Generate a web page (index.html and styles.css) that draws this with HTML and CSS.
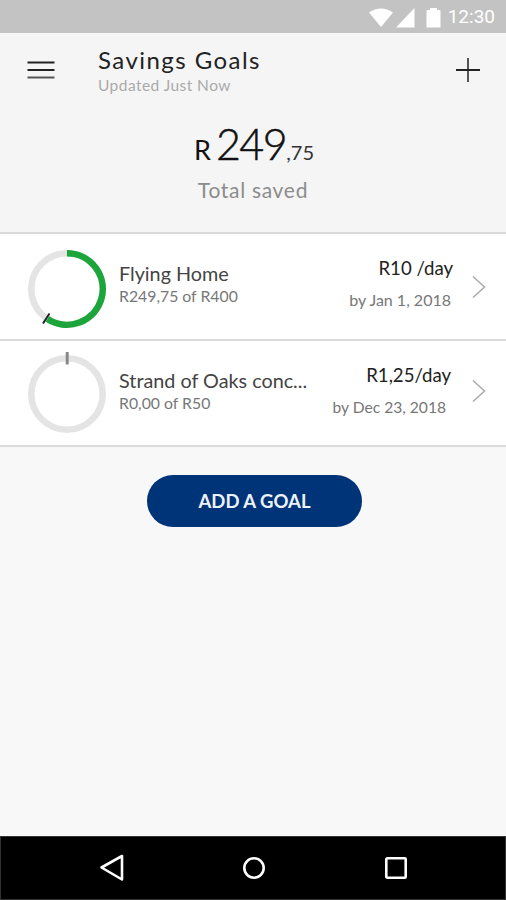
FILE: index.html
```html
<!DOCTYPE html>
<html lang="en">
<head>
    <meta charset="UTF-8">
    <meta name="viewport" content="width=device-width, initial-scale=1.0">
    <title>Savings Goals</title>
    <link rel="stylesheet" href="styles.css">
</head>
<body>
    <div class="screen">
        <div class="status-bar">
            <svg width="75" height="22" viewBox="0 0 75 22" fill="#fff">
                <path d="M1 5.500Q13 -2.500 25 5.500L13 20Z"/>
                <path d="M28 20.500L46.500 1V20.500Z"/>
                <path d="M58.500 4Q58.500 3 59.500 3H62V1H69V3H71.500Q72.500 3 72.500 4V20.500H58.500Z"/>
            </svg>
            <span class="clock">12:30</span>
        </div>

        <header class="header">
            <div class="toolbar">
                <svg class="menu-icon" width="28" height="20" viewBox="0 0 28 20" stroke="#222" stroke-width="2">
                    <path d="M0.500 2.500H27.500M0.500 10H27.500"/>
                    <path d="M0.500 17.500H27.500" stroke="#555"/>
                </svg>
                <div class="heading">
                    <h1>Savings Goals</h1>
                    <p class="updated">Updated Just Now</p>
                </div>
                <svg class="add-icon" width="24" height="24" viewBox="0 0 24 24" stroke-width="2">
                    <path d="M12 0V24" stroke="#555"/>
                    <path d="M0 12H24" stroke="#222"/>
                </svg>
            </div>
            <div class="total">
                <div class="amount">
                    <span class="currency">R</span>
                    <span class="whole">249</span>
                    <span class="cents">,75</span>
                </div>
                <p class="total-label">Total saved</p>
            </div>
        </header>

        <main>
            <div class="goal">
                <svg class="ring" width="82" height="86" viewBox="0 0 82 86" fill="none">
                    <circle cx="41" cy="43" r="35.750" stroke="#e4e4e4" stroke-width="6.500"/>
                    <path d="M41 7.250A35.750 35.750 0 1 1 21.500 72.960" stroke="#1ba53a" stroke-width="6.500"/>
                    <path d="M23.500 67.500L17 77.500" stroke="#222" stroke-width="2"/>
                </svg>
                <div class="goal-info">
                    <h2>Flying Home</h2>
                    <p class="progress">R249,75 of R400</p>
                </div>
                <div class="goal-plan">
                    <p class="rate">R10 /day</p>
                    <p class="due">by Jan 1, 2018</p>
                </div>
                <svg class="chevron" width="14" height="24" viewBox="0 0 14 24" fill="none" stroke="#aaa" stroke-width="1.500">
                    <path d="M1 1.500L12.500 12L1 22.500"/>
                </svg>
            </div>
            <div class="goal second">
                <svg class="ring" width="82" height="86" viewBox="0 0 82 86" fill="none">
                    <circle cx="41" cy="43" r="35.750" stroke="#e4e4e4" stroke-width="6.500"/>
                    <path d="M41.200 1V13.500" stroke="#888" stroke-width="3"/>
                </svg>
                <div class="goal-info">
                    <h2>Strand of Oaks conc...</h2>
                    <p class="progress">R0,00 of R50</p>
                </div>
                <div class="goal-plan">
                    <p class="rate">R1,25/day</p>
                    <p class="due">by Dec 23, 2018</p>
                </div>
                <svg class="chevron" width="14" height="24" viewBox="0 0 14 24" fill="none" stroke="#aaa" stroke-width="1.500">
                    <path d="M1 1.500L12.500 12L1 22.500"/>
                </svg>
            </div>
            <button class="add-goal">ADD A GOAL</button>
        </main>

        <nav class="nav-bar">
            <svg width="26" height="30" viewBox="0 0 26 30" fill="none" stroke="#fff" stroke-width="2.600" stroke-linejoin="round">
                <path d="M2.500 14.500L23 3V26.500Z"/>
            </svg>
            <svg width="26" height="30" viewBox="0 0 26 30" fill="none" stroke="#fff" stroke-width="2.600">
                <circle cx="13" cy="15" r="9.700"/>
            </svg>
            <svg width="26" height="30" viewBox="0 0 26 30" fill="none" stroke="#fff" stroke-width="2.600">
                <rect x="3.300" y="5.300" width="19.400" height="19.400" rx="1"/>
            </svg>
        </nav>
    </div>
</body>
</html>
```
FILE: styles.css
```css
* {
    margin: 0;
    padding: 0;
    box-sizing: border-box;
}

body {
    font-family: Lato, 'Open Sans', sans-serif;
    background: #f8f8f8;
}

.screen {
    display: flex;
    flex-direction: column;
    width: 506px;
    height: 900px;
    overflow: hidden;
}

.status-bar {
    display: flex;
    justify-content: flex-end;
    align-items: center;
    gap: 5px;
    height: 33px;
    padding-right: 11px;
    background: #c3c3c3;
    color: #fff;
}

.status-bar svg {
    position: relative;
    top: 1px;
}

.clock {
    font-family: Roboto, sans-serif;
    font-size: 19px;
    line-height: 22px;
}

.header {
    height: 201px;
    padding-top: 13px;
    background: #f5f5f5;
    border-bottom: 2px solid #dadada;
}

.toolbar {
    display: flex;
    height: 73px;
    padding: 0 26px 0 27px;
}

.menu-icon {
    margin-top: 14px;
}

.add-icon {
    margin-top: 12px;
}

.heading {
    flex: 1;
    padding-left: 43px;
}

h1 {
    font-size: 24px;
    font-weight: 400;
    line-height: 28px;
    letter-spacing: 1.45px;
    color: #222;
}

.updated {
    margin-top: 1px;
    font-size: 15.5px;
    line-height: 20px;
    letter-spacing: 0.45px;
    color: #aaa;
}

.total {
    text-align: center;
}

.amount {
    display: flex;
    justify-content: center;
    align-items: baseline;
    height: 58px;
    padding-left: 2px;
    line-height: 50px;
    color: #111;
}

.currency {
    margin-right: 5px;
    font-size: 27px;
}

.whole {
    font-size: 43px;
    font-weight: 300;
    letter-spacing: -1.5px;
    -webkit-text-stroke: 0.5px #111;
}

.cents {
    font-size: 20px;
    color: #333;
}

.total-label {
    font-size: 21px;
    line-height: 26px;
    letter-spacing: 0.7px;
    color: #8c8c8c;
}

main {
    flex: 1;
}

.goal {
    display: flex;
    align-items: flex-start;
    height: 107px;
    padding: 12px 20px 0 26px;
    background: #fff;
    border-bottom: 2px solid #dadada;
}

.goal-info {
    flex: 1;
    padding: 15px 0 0 11px;
}

h2 {
    font-size: 19.8px;
    font-weight: 400;
    line-height: 24px;
    white-space: nowrap;
    color: #444;
}

.progress {
    font-size: 15.8px;
    line-height: 22px;
    color: #777;
}

.goal-plan {
    padding-top: 10px;
    text-align: right;
}

.rate {
    font-size: 18.6px;
    line-height: 24px;
    color: #222;
}

.due {
    margin-top: 9px;
    padding-right: 2px;
    font-size: 16px;
    line-height: 22px;
    color: #777;
}

.chevron {
    margin: 29px 0 0 19px;
}

.second {
    height: 106px;
    padding-top: 10px;
}

.second .goal-info {
    padding-top: 17px;
}

.second .goal-plan {
    padding-top: 12px;
}

.second .rate {
    padding-right: 2px;
}

.second .due {
    padding-right: 7px;
    font-size: 15.6px;
}

.second .chevron {
    margin-top: 28px;
}

.add-goal {
    display: block;
    width: 215px;
    height: 52px;
    margin: 28px 0 0 147px;
    border: none;
    border-radius: 26px;
    background: #003478;
    color: #eef2fa;
    font-family: inherit;
    font-size: 18.5px;
    font-weight: 700;
}

.nav-bar {
    display: flex;
    justify-content: space-between;
    height: 64px;
    padding: 16px 96px 0 98px;
    background: #000;
    border: 1px solid #333;
}
```
